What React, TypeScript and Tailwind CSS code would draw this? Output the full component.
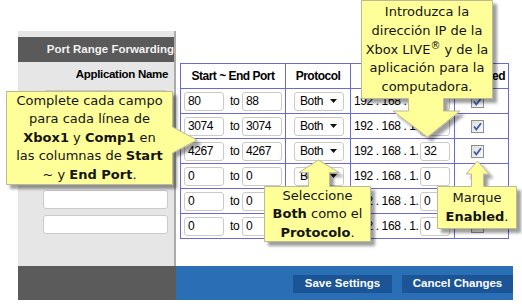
import React from "react";

const rows = [
  { s: "80", e: "88", ip: "", chk: true },
  { s: "3074", e: "3074", ip: "", chk: true },
  { s: "4267", e: "4267", ip: "32", chk: true },
  { s: "0", e: "0", ip: "0", chk: false },
  { s: "0", e: "0", ip: "0", chk: false },
  { s: "0", e: "0", ip: "0", chk: false },
];

function Box({ value, w }: { value: string; w: string }) {
  return (
    <div
      className={`${w} h-[19px] bg-white border border-[#cacaca] rounded-[3px] pl-[3px] flex items-center text-[12px] tracking-[-0.4px] text-black`}
    >
      {value}
    </div>
  );
}

function Check({ on }: { on: boolean }) {
  return (
    <svg width="13" height="13" viewBox="0 0 13 13">
      <defs>
        <linearGradient id="cbg" x1="0" y1="0" x2="1" y2="1">
          <stop offset="0" stopColor="#dcdcdc" />
          <stop offset="1" stopColor="#fbfbfb" />
        </linearGradient>
      </defs>
      <rect x="0.5" y="0.5" width="12" height="12" fill="url(#cbg)" stroke="#8e8f8f" />
      {on && (
        <path d="M3 6.5 L5.3 9.5 L10 3.2" fill="none" stroke="#3a5cb0" strokeWidth="1.8" />
      )}
    </svg>
  );
}

const cell = "h-[25px] border-r border-b border-[#6a6ad0] flex items-center";
const head = "justify-center text-[12px] font-bold tracking-[-0.5px]";

export default function App() {
  return (
    <div className="relative w-[522px] h-[306px] bg-white overflow-hidden font-['Liberation_Sans',Arial,sans-serif] text-black">
      <div className="h-[31px]" />
      <div className="flex h-[235px]">
        <div className="ml-[18px] w-[158px] bg-[#e6e6e6] border-r-2 border-[#acacac] pt-[6px] flex flex-col">
          <div className="h-[25px] bg-[#5a5a5a] flex items-center justify-end text-[11.5px] font-bold text-[#f2f2f2] whitespace-nowrap">
            Port Range Forwarding
          </div>
          <div className="h-[25px] flex items-center justify-end pr-[6px] text-[11.5px] font-bold tracking-[-0.3px]">
            Application Name
          </div>
          {rows.map((_, i) => (
            <div key={i} className="h-[25px] flex items-center justify-end pr-[6px]">
              <Box value="" w="w-[125px]" />
            </div>
          ))}
        </div>
        <div className="flex-1 pl-[4px] pt-[32px]">
          <div className="grid grid-cols-[105px_65px_104px_54px] w-[329px] border-l border-t border-[#6a6ad0]">
            <div className={`${cell} ${head}`}>Start ~ End Port</div>
            <div className={`${cell} ${head}`}>Protocol</div>
            <div className={`${cell} ${head}`}>To IP Address</div>
            <div className={`${cell} ${head} pl-[4px]`}>Enabled</div>
            {rows.map((r, i) => (
              <React.Fragment key={i}>
                <div className={`${cell} pl-[3px]`}>
                  <Box value={r.s} w="w-[40px]" />
                  <span className="w-[18px] pl-[6px] text-[12px] tracking-[-0.4px]">to</span>
                  <Box value={r.e} w="w-[40px]" />
                </div>
                <div className={`${cell} pl-[8px]`}>
                  <div className="w-[50px] h-[19px] bg-white border border-[#cacaca] rounded-[3px] flex items-center pl-[5px] pr-[6px] text-[12px] tracking-[-0.4px]">
                    <span className="flex-1">Both</span>
                    <svg width="7" height="4" viewBox="0 0 7 4">
                      <path d="M0 0 H7 L3.5 4 Z" fill="#111" />
                    </svg>
                  </div>
                </div>
                <div className={`${cell} pl-[3px]`}>
                  <span className="w-[66px] text-[12px] tracking-[-0.4px] whitespace-nowrap">192 . 168 . 1.</span>
                  <Box value={r.ip} w="w-[30px]" />
                </div>
                <div className={`${cell} pl-[16px]`}>
                  <Check on={r.chk} />
                </div>
              </React.Fragment>
            ))}
          </div>
        </div>
      </div>
      <div className="flex h-[34px]">
        <div className="ml-[18px] w-[158px] bg-[#5b5b5b]" />
        <div className="w-[337px] bg-[#2a6fb6] flex justify-end items-start pt-[9px] gap-[10px]">
          <div className="w-[99px] h-[18px] bg-[#1b5595] flex items-center justify-center text-white text-[11.5px] font-bold">
            Save Settings
          </div>
          <div className="w-[111px] h-[18px] bg-[#1b5595] flex items-center justify-center text-white text-[11.5px] font-bold">
            Cancel Changes
          </div>
        </div>
      </div>

      <svg className="absolute left-0 top-0 pointer-events-none" width="522" height="306" viewBox="0 0 522 306">
        <defs>
          <filter id="sh" x="-20%" y="-20%" width="140%" height="140%">
            <feDropShadow dx="4" dy="4" stdDeviation="1.6" floodColor="#000" floodOpacity="0.38" />
          </filter>
        </defs>
        <g fill="#ffff99" stroke="#bcba90" strokeWidth="1" filter="url(#sh)">
          <path d="M6.5 91.5 H172.5 V127 L197 140 L172.5 153 V184.5 H6.5 Z" />
          <path d="M361.5 0.5 H492.5 V98.5 H443.5 V111 H460 L427.5 137 L393 111 H408.5 V98.5 H361.5 Z" />
          <path d="M264.5 186.5 H308.5 V172.5 H299 L318.5 160 L339 172.5 H329.5 V186.5 H370.5 V241.5 H264.5 Z" />
          <path d="M437.5 186.5 H471.5 V174 H466 L477.5 161 L489 174 H483.5 V186.5 H516.5 V228.5 H437.5 Z" />
        </g>
      </svg>

      <div className="absolute left-[7px] top-[92px] w-[165px] text-center text-[13px] leading-[18.4px] text-[#141414] font-['DejaVu_Sans',Verdana,sans-serif]">
        Complete cada campo<br />
        para cada línea de<br />
        <b>Xbox1</b> y <b>Comp1</b> en<br />
        las columnas de <b>Start</b><br />
        ~ y <b>End Port</b>.
      </div>
      <div className="absolute left-[362px] top-[3px] w-[130px] text-center text-[13px] leading-[18.75px] text-[#141414] font-['DejaVu_Sans',Verdana,sans-serif]">
        Introduzca la<br />
        dirección IP de la<br />
        Xbox LIVE<sup className="text-[10px]">®</sup> y de la<br />
        aplicación para la<br />
        computadora.
      </div>
      <div className="absolute left-[265px] top-[187px] w-[105px] text-center text-[13px] leading-[18.3px] text-[#141414] font-['DejaVu_Sans',Verdana,sans-serif]">
        Seleccione<br />
        <b>Both</b> como el<br />
        <b>Protocolo</b>.
      </div>
      <div className="absolute left-[438px] top-[188px] w-[78px] text-center text-[13px] leading-[19px] text-[#141414] font-['DejaVu_Sans',Verdana,sans-serif]">
        Marque<br />
        <b>Enabled</b>.
      </div>
    </div>
  );
}
